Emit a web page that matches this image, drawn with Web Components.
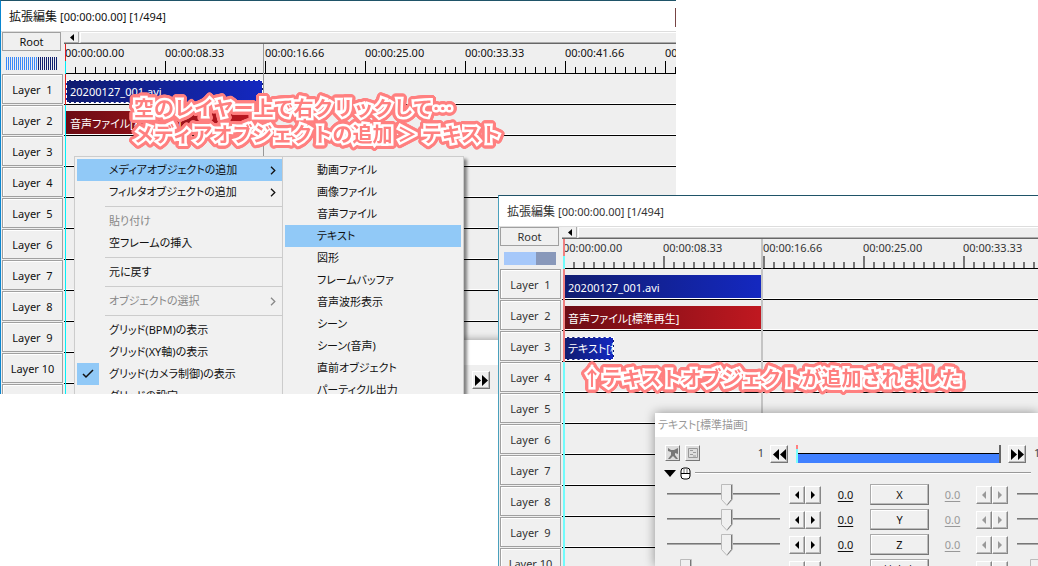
<!DOCTYPE html>
<html lang="ja">
<head>
<meta charset="utf-8">
<title>拡張編集</title>
<style>
body { margin: 0; background: #fff; font-family: "Noto Sans", "Noto Sans CJK JP", sans-serif; font-size: 11px; font-feature-settings: "palt"; color: #111; }
</style>
</head>
<body>
<edit-desktop></edit-desktop>

<script>
const BASE = `<style>
*{box-sizing:border-box}
button{font:inherit;font-feature-settings:inherit;color:inherit;margin:0;padding:0;border-radius:0;appearance:none}
</style>`;
class Base extends HTMLElement {
  constructor() { super(); this.attachShadow({ mode: 'open' }); }
  connectedCallback() { this.shadowRoot.innerHTML = BASE + this.render(); }
  attr(n, d = '') { return this.getAttribute(n) ?? d; }
}

/* One layer: its header button and the track that holds the clips */
customElements.define('layer-row', class extends Base {
  render() {
    return `<style>
:host{display:grid;grid-template-columns:63px 1fr;height:31px}
button{height:30px;margin:0 1px 0 1px;background:#f0f0f0;border:1px solid #a0a0a0;white-space:pre;box-shadow:inset 1px 1px #fff}
.track{display:flex;padding:6px 0 1px 2px;border-bottom:1px solid #000;box-shadow:inset 0 -1px #fff}
</style><button type="button">${this.attr('name')}</button><div class="track"><slot></slot></div>`;
  }
});

customElements.define('time-clip', class extends Base {
  render() {
    return `<style>
:host{display:block;width:197px;height:23px;line-height:23px;padding-left:4px;padding-top:1px;color:#fff;white-space:nowrap;overflow:hidden;background:linear-gradient(90deg,#101c70,#1428c0);box-sizing:border-box}
:host([kind=audio]){background:linear-gradient(90deg,#6c0c14,#c01820)}
:host([selected]){border:1px dashed #fff;padding-left:3px;padding-top:0;line-height:22px}
:host([short]){width:50px}
</style><slot></slot>`;
  }
});

/* Timeline window: title, root button, ruler and layers */
customElements.define('timeline-window', class extends Base {
  render() {
    const labels = ['00:00:00.00', '00:00:08.33', '00:00:16.66', '00:00:25.00', '00:00:33.33', '00:00:41.66', '00:00:50.00'];
    return `<style>
:host{display:block;position:relative;overflow:hidden;background:#efefef;border-top:1px solid #1f5368;border-left:1px solid var(--edge,#0a86d0)}
header{height:31px;background:#fff;border-bottom:1px solid #ddd;display:flex;align-items:center;gap:3px;padding-left:8px}
header b{font-weight:400;font-size:12px}
.top{display:grid;grid-template-columns:63px 1fr;height:42px}
.left{padding:0 3px 0 1px}
.root{display:block;width:59px;height:19px;background:#f0f0f0;border:1px solid #a0a0a0}
.zoom{margin:6px 0 0 4px;width:52px;height:13px;background:var(--zoom)}
.right{display:flex;flex-direction:column;min-width:0;overflow:hidden}
.bar{display:flex;height:12px;flex:none;border-bottom:1px solid #666;gap:1px}
.bar button{width:15px;border:0;border-right:1px solid #aaa;border-bottom:1px solid #aaa;background:#f0f0f0;display:grid;place-items:center}
.thumb{flex:1;border-left:1px solid #fff;border-top:1px solid #fff;border-bottom:1px solid #aaa;background:#eee}
.ruler{flex:1;display:flex;border-bottom:1px solid #000;margin-left:1px;
 background:repeating-linear-gradient(90deg,var(--tick) 0 var(--tw),transparent var(--tw) 10px) bottom/100% 6px no-repeat,repeating-linear-gradient(90deg,var(--tick) 0 var(--tw),transparent var(--tw) 100px) bottom/100% 12px no-repeat}
.ruler span{flex:0 0 100px;line-height:18px;height:18px}
.head,.end{position:absolute;top:43px;bottom:0;width:var(--tw)}
.head{left:64px;background:linear-gradient(var(--red) 17px,var(--cyan) 17px 30px,var(--red) 30px var(--clips),var(--cyan) var(--clips))}
.end{left:262px;background:var(--end)}
</style>
<header><b>拡張編集</b><span>[00:00:00.00] [1/494]</span></header>
<div class="top"><div class="left"><button class="root" type="button">Root</button><div class="zoom"></div></div>
<div class="right"><div class="bar"><button type="button" aria-label="前へ"><svg width="5" height="7"><path d="M5 0v7L1 3.500z"/></svg></button><div class="thumb"></div></div>
<div class="ruler">${labels.map(t => `<span>${t}</span>`).join('')}</div></div></div>
<slot></slot><div class="end"></div><div class="head"></div>`;
  }
});

customElements.define('menu-panel', class extends Base {
  render() {
    return `<style>
:host{display:block;box-sizing:border-box;background:#f1f1f1;border:1px solid #ccc;padding:2px;box-shadow:3px 3px 3px #0007}
</style><div role="menu"><slot></slot></div>`;
  }
});
customElements.define('menu-entry', class extends Base {
  render() {
    const check = this.hasAttribute('checked') ? '<svg viewBox="0 0 22 22" width="22" height="22"><path d="M6 11l3 3 7-7" fill="none" stroke="#111" stroke-width="1.500"/></svg>' : '';
    const arrow = this.hasAttribute('sub') ? '<svg viewBox="0 0 7 9" width="7" height="9"><path d="M1 .8l3.800 3.700L1 8.200" fill="none" stroke="currentColor" stroke-width="1.300"/></svg>' : '';
    return `<style>
:host{display:block}
button{display:grid;grid-template-columns:22px 1fr 12px;column-gap:10px;align-items:center;width:100%;height:22px;border:0;background:none;text-align:left;white-space:nowrap}
span{line-height:22px}
:host([active]) button{background:#91c9f7}
:host([off]) button{color:#888}
i{height:22px}
:host([checked]) i{background:#91c9f7}
</style><button type="button" role="menuitem"><i>${check}</i><span><slot></slot></span>${arrow}</button>`;
  }
});
customElements.define('menu-line', class extends Base {
  render() { return `<style>:host{display:block;height:1px;margin:3px 0 3px 28px;background:#ccc}</style>`; }
});

/* Outlined caption laid over the windows */
customElements.define('note-text', class extends Base {
  render() {
    const ring = [[1, 1], [-1, -1], [1, -1], [-1, 1], [1, 0], [-1, 0], [0, 1], [0, -1]].map(([x, y]) => `drop-shadow(${x}px ${y}px 0 #ff8080)`).join(' ');
    return `<style>
:host{display:block;font:700 20px/26px "Noto Sans CJK JP",sans-serif;font-feature-settings:normal;color:#ff8080;white-space:pre;-webkit-text-stroke:5px #fff;paint-order:stroke fill;stroke-linejoin:round;filter:${ring}}
</style><slot></slot>`;
  }
});

const ARROW = { left: 'M5 0v8L1 4z', right: 'M1 0v8l4-4z' };
customElements.define('step-pair', class extends Base {
  render() {
    const b = (d, l) => `<button type="button" aria-label="${l}"><svg width="6" height="8"><path d="${ARROW[d]}" fill="currentColor"/></svg></button>`;
    return `<style>
:host{display:flex;width:32px;height:18px;color:#000}
:host([off]){color:#999}
button{flex:1;display:grid;place-items:center;background:#f0f0f0;border:1px solid;border-color:#fff #888 #888 #fff;box-shadow:inset -1px -1px #bbb}
</style>${b('left', '減らす')}${b('right', '増やす')}`;
  }
});

customElements.define('skip-button', class extends Base {
  render() {
    const p = this.hasAttribute('back') ? 'M7 0v11L1 5.500zM14 0v11L8 5.500z' : 'M1 0v11l6-5.500zM8 0v11l6-5.500z';
    return `<style>
:host{display:block}
button{display:grid;place-items:center;width:18px;height:18px;background:#f0f0f0;border:1px solid;border-color:#fff #777 #777 #fff;box-shadow:inset -1px -1px #bbb}
</style><button type="button" aria-label="移動"><svg width="15" height="11"><path d="${p}"/></svg></button>`;
  }
});

const thumb = "url(\"data:image/svg+xml,%3Csvg xmlns='http://www.w3.org/2000/svg' width='12' height='22'%3E%3Cpath d='M.5.5h11v15l-5.500 6-5.500-6z' fill='%23f0f0f0' stroke='%23bbb'/%3E%3Cpath d='M10.500 1v14.500L6.500 20.500' fill='none' stroke='%23777'/%3E%3C/svg%3E\")";
customElements.define('param-row', class extends Base {
  render() {
    const n = this.attr('name'), v = this.attr('value', '0.0'), pos = this.attr('pos', '53');
    return `<style>
:host{display:grid;grid-template-columns:122px 32px 49px 59px 47px 32px 122px;align-items:center;height:25px;padding-left:12px;width:560px}
input{appearance:none;width:113px;height:22px;margin:0;background:linear-gradient(#777,#777) center 9px/100% 1px no-repeat,linear-gradient(#aaa,#aaa) center 10px/100% 1px no-repeat}
input:last-child{justify-self:end}
input::-webkit-slider-thumb{appearance:none;width:12px;height:22px;background:${thumb}}
.v{text-align:center;text-decoration:underline;text-underline-offset:2px}
.off{color:#999}
.n{height:21px;background:#f0f0f0;border:1px solid;border-color:#aaa #777 #777 #aaa;box-shadow:inset -1px -1px #bbb,inset 1px 1px #fff}
</style><input type="range" value="${pos}" aria-label="${n} 開始"><step-pair></step-pair><span class="v">${v}</span><button class="n" type="button">${n}</button><span class="v off">${v}</span><step-pair off></step-pair><input type="range" value="${pos}" aria-label="${n} 終了">`;
  }
});

customElements.define('object-panel', class extends Base {
  render() {
    return `<style>
:host{display:block;overflow:hidden;background:#efefef;box-shadow:0 0 10px #0006}
header{height:24px;line-height:23px;background:#fff;color:#999;padding-left:3px}
.play{display:flex;align-items:flex-start;height:29px;padding:8px 0 0 10px;white-space:nowrap}
.play>*{flex:none}
.tool{width:15px;height:16px;margin-right:5px;background:#ddd;border:1px solid;border-color:#fff #777 #777 #fff;display:grid;place-items:center}
.num{width:59px;text-align:right;margin-right:6px;line-height:16px;color:#444}
.range{flex:1 1 0;height:18px;margin:0 7px 0 8px;border-right:2px solid #666;background:linear-gradient(#ff8080,#ff8080) 0 0/2px 4px no-repeat,linear-gradient(#7ff,#7ff) 0 4px/2px 14px no-repeat,linear-gradient(#000,#000) 0 8px/100% 1px no-repeat,linear-gradient(#4080ff,#4080ff) 0 9px/100% 9px no-repeat}
.last{width:4px;margin-left:8px;line-height:16px;color:#444}
.sep{display:flex;align-items:center;gap:4px;height:14px;padding:0 7px 0 9px;margin-bottom:2px}
.sep hr{flex:1;margin:0;border:0;border-top:1px solid #999;border-bottom:1px solid #fff}
</style>
<header>テキスト[標準描画]</header>
<div class="play"><button class="tool" type="button" aria-label="カメラ"><svg width="12" height="12"><path d="M1 1l3 2h3l4-2v6L8 6v2l3 4H9L6 9l-3 3H1l3-4V5L1 4z" fill="#777"/></svg></button><button class="tool" type="button" aria-label="設定"><svg width="12" height="12"><path d="M1.500 1.500h9v9h-9zM3 3.500h3M6 5.500h3M3 7.500h3M6 9h3" fill="none" stroke="#999"/></svg></button>
<span class="num">1</span><skip-button back></skip-button><div class="range"></div><skip-button></skip-button><span class="last">1</span></div>
<div class="sep"><svg width="12" height="7"><path d="M0 0h12L6 7z"/></svg><svg width="11" height="13"><rect x="1" y="1" width="9" height="11" rx="3" fill="#fff" stroke="#000"/><path d="M1 6.500h9" stroke="#000"/><path d="M4 1v5M7 1v5" stroke="#777" fill="none"/></svg><hr></div>
<param-row name="X"></param-row><param-row name="Y"></param-row><param-row name="Z"></param-row><param-row name="拡大率" value="100.00" pos="13"></param-row>`;
  }
});

/* Free canvas on which the windows, menus and captions overlap */
customElements.define('edit-desktop', class extends Base {
  render() {
    const layers = (map) => Array.from({ length: 11 }, (_, i) => `<layer-row name="Layer ${i < 9 ? ' ' : ''}${i + 1}">${map[i] || ''}</layer-row>`).join('');
    const video = s => `<time-clip ${s}>20200127_001.avi</time-clip>`;
    const audio = '<time-clip kind="audio">音声ファイル[標準再生]</time-clip>';
    const e = (t, a = '') => `<menu-entry ${a}>${t}</menu-entry>`, hr = '<menu-line></menu-line>';
    return `<style>
:host{display:block;position:relative;height:100vh;overflow:hidden}
.before{position:absolute;left:0;top:0;width:676px;height:394px;overflow:hidden}
.one{height:100%;--tick:#000;--tw:1px;--end:#999;--red:#e02020;--cyan:#00f0f8;--clips:61px;--zoom:repeating-linear-gradient(90deg,transparent 0 1px,#efefef 1px 2px),linear-gradient(90deg,#3a88f8 32px,#102070 32px)}
.two{position:absolute;left:499px;top:195px;right:0;bottom:0;margin-left:-1px;color:#333;--edge:#4aa0bc;--tick:#777;--tw:2px;--end:#c4c4c4;--red:#f08080;--cyan:#70fcfc;--clips:123px;--zoom:linear-gradient(90deg,#a6c8fa 32px,#8898ba 32px)}
.mark{position:absolute;right:0;top:8px;width:1px;height:19px;background:#744}
.main{position:absolute;left:74px;top:156px;width:209px;padding-right:0}
.sub{position:absolute;left:282px;top:156px;width:182px}
.behind{position:absolute;left:340px;top:340px;width:240px;height:60px;background:#efefef;border-top:25px solid #fff;box-shadow:0 0 8px #0006;padding:6px 0 0 132px}
object-panel{position:absolute;left:655px;top:413px;right:0;bottom:0}
.n1{position:absolute;left:134px;top:95px}
.n2{position:absolute;left:582px;top:365px}
</style>
<div class="before">
<timeline-window class="one">${layers([video('selected'), audio])}</timeline-window><div class="mark"></div>
<div class="behind"><skip-button></skip-button></div>
<menu-panel class="main">${e('メディアオブジェクトの追加', 'active sub')}${e('フィルタオブジェクトの追加', 'sub')}${hr}${e('貼り付け', 'off')}${e('空フレームの挿入')}${hr}${e('元に戻す')}${hr}${e('オブジェクトの選択', 'off sub')}${hr}${e('グリッド(BPM)の表示')}${e('グリッド(XY軸)の表示')}${e('グリッド(カメラ制御)の表示', 'checked')}${e('グリッドの設定')}</menu-panel>
<menu-panel class="sub">${['動画ファイル', '画像ファイル', '音声ファイル', 'テキスト', '図形', 'フレームバッファ', '音声波形表示', 'シーン', 'シーン(音声)', '直前オブジェクト', 'パーティクル出力'].map(t => e(t, t === 'テキスト' ? 'active' : '')).join('')}</menu-panel>
</div>
<timeline-window class="two">${layers([video(''), audio, '<time-clip selected short>テキスト[標準描画]</time-clip>'])}</timeline-window>
<object-panel></object-panel>
<note-text class="n1">空のレイヤー上で右クリックして…
メディアオブジェクトの追加 ＞ テキスト</note-text>
<note-text class="n2">↑テキストオブジェクトが追加されました</note-text>`;
  }
});
</script>
</body>
</html>
